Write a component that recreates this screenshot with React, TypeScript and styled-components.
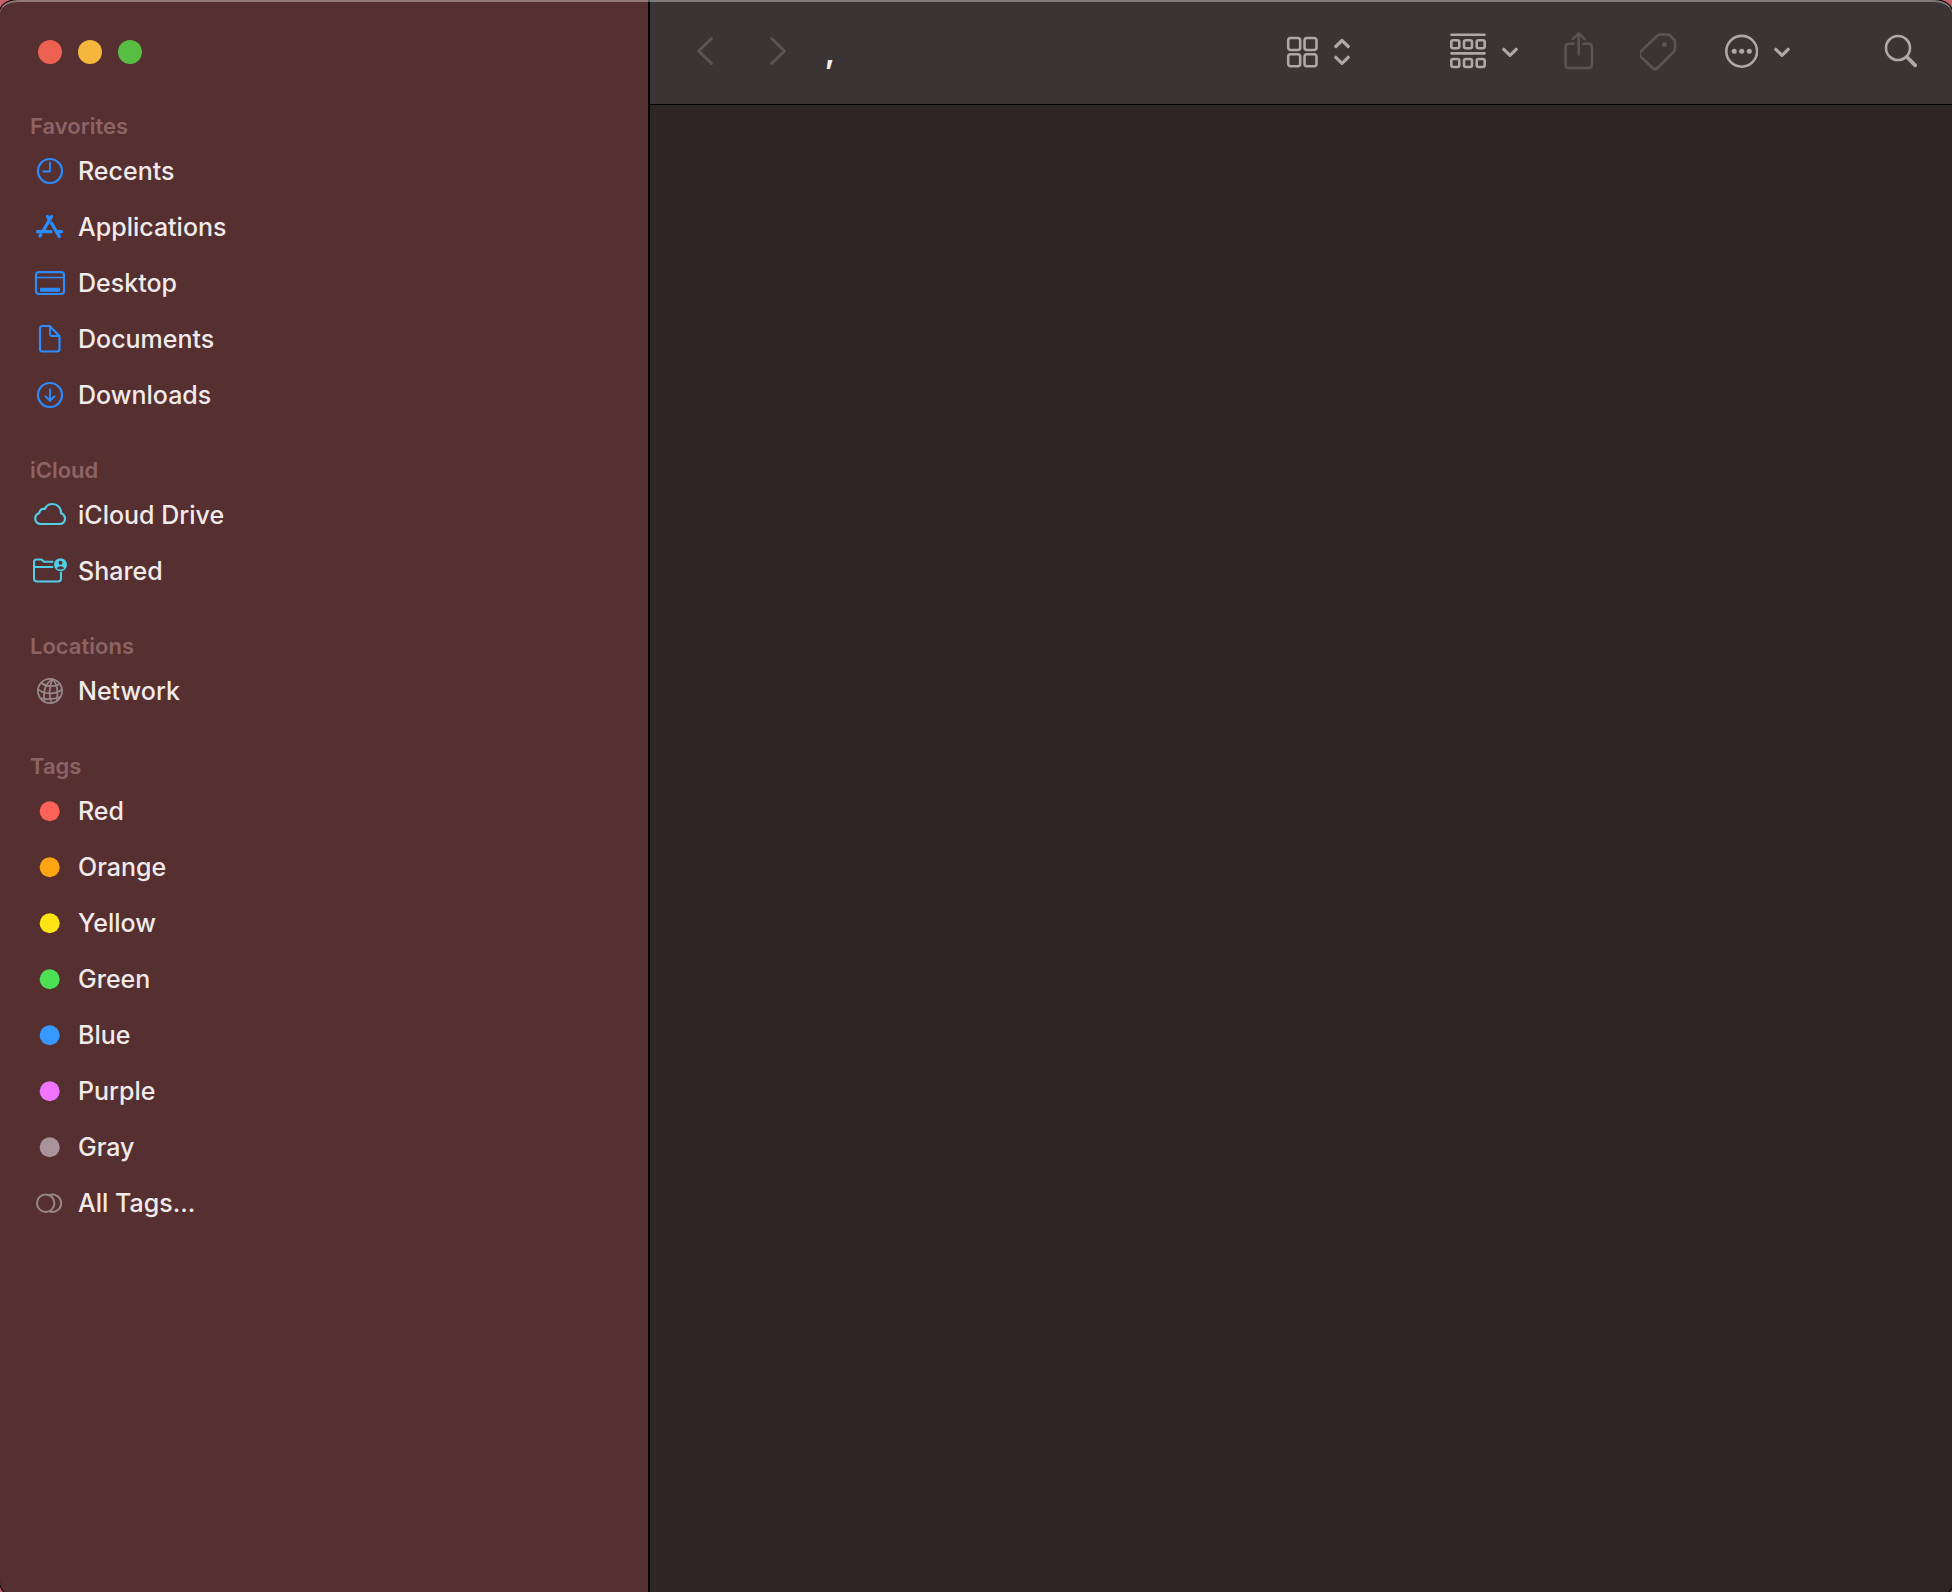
import React from "react";
import styled, { createGlobalStyle } from "styled-components";

const GlobalStyle = createGlobalStyle`
  *, *::before, *::after { box-sizing: border-box; }
  body {
    margin: 0;
    background: #c5636b;
    font-family: Inter, "Liberation Sans", sans-serif;
  }
`;

const Window = styled.div`
  position: relative;
  display: grid;
  grid-template-columns: 650px 1fr;
  min-height: 100vh;
  overflow: hidden;
  background: #2e2524;
  border-radius: 18px 18px 5px 6px / 12px 12px 7px 12px;
  box-shadow: 0 0 0 1px #000;

  &::after {
    content: "";
    position: absolute;
    inset: 0;
    border-radius: inherit;
    box-shadow: inset 0 2px 0 rgba(255, 255, 255, 0.35);
    pointer-events: none;
  }
`;

const Sidebar = styled.aside`
  background: #562f30;
  border-right: 2px solid #000;
`;

const TrafficLights = styled.div`
  display: flex;
  align-items: flex-start;
  gap: 16px;
  height: 79px;
  padding: 40px 38px 0;
`;

const Light = styled.button<{ $color: string }>`
  width: 24px;
  height: 24px;
  padding: 0;
  border: 0;
  border-radius: 50%;
  background: ${(p) => p.$color};
`;

const SectionTitle = styled.h2`
  margin: 0;
  height: 64px;
  padding: 35px 30px 0;
  font-size: 22px;
  line-height: 24px;
  font-weight: 600;
  color: #8d6466;
`;

const List = styled.ul`
  margin: 0;
  padding: 0;
  list-style: none;
`;

const Item = styled.a`
  display: flex;
  align-items: center;
  gap: 10px;
  height: 56px;
  padding: 0 32px;
  font-size: 25px;
  line-height: 32px;
  font-weight: 500;
  color: #f0eaea;
  text-decoration: none;
`;

const ItemIcon = styled.svg<{ $color: string }>`
  flex: none;
  width: 36px;
  height: 36px;
  fill: none;
  stroke: ${(p) => p.$color};
  stroke-width: 2.2;
  stroke-linecap: round;
  stroke-linejoin: round;
  color: ${(p) => p.$color};
`;

const Main = styled.main`
  display: flex;
  flex-direction: column;
`;

const Toolbar = styled.header`
  display: flex;
  align-items: center;
  height: 105px;
  padding: 0 34px 0 46px;
  background: #3b3434;
  border-bottom: 1px solid #000;
`;

const Navigation = styled.div`
  display: flex;
  gap: 56px;
`;

const Title = styled.h1`
  flex: 1;
  margin: 0 0 0 37px;
  font-size: 30px;
  line-height: 36px;
  font-weight: 700;
  color: #f0eeee;
`;

const Controls = styled.div`
  display: flex;
  gap: 94px;
`;

const Actions = styled.div`
  display: flex;
  gap: 46px;
`;

const ToolButton = styled.button`
  display: flex;
  gap: 16px;
  padding: 0;
  border: 0;
  background: none;
  color: #aea8a8;

  &:disabled {
    color: #5b5454;
  }
`;

const Glyph = styled.svg`
  display: block;
  height: 40px;
  fill: none;
  stroke: currentColor;
  stroke-width: 2.6;
  stroke-linecap: round;
  stroke-linejoin: round;
`;

function ToolIcon({ width, children }: { width: number; children: React.ReactNode }) {
  return (
    <Glyph width={width} viewBox={`0 0 ${width} 40`} aria-hidden="true">
      {children}
    </Glyph>
  );
}

const blue = "#2a8cff";
const cyan = "#50cfe8";
const gray = "#978887";

const dot = <circle cx="17.700" cy="18.200" r="10" fill="currentColor" stroke="none" />;

type Entry = { label: string; color: string; icon: React.ReactNode };

const sections: { title: string; items: Entry[] }[] = [
  {
    title: "Favorites",
    items: [
      {
        label: "Recents",
        color: blue,
        icon: (
          <>
            <circle cx="18" cy="18" r="12" />
            <path d="M18 9.5V18.500H11.200" strokeWidth="1.800" />
          </>
        ),
      },
      {
        label: "Applications",
        color: blue,
        icon: (
          <>
            <path d="M15.500 7.500L17.500 11M19.500 7.500L10.800 22.500M8 27L8.800 25.700" strokeWidth="3.300" />
            <path d="M5.500 22.700H19M26 22.700H29.500M19.500 14.200L27.300 27.500" strokeWidth="3.300" />
          </>
        ),
      },
      {
        label: "Desktop",
        color: blue,
        icon: (
          <>
            <rect x="4" y="7.200" width="28" height="21.800" rx="3" />
            <path d="M4 12.500H32" strokeWidth="1.600" strokeLinecap="butt" />
            <rect x="8" y="22.700" width="20" height="4" rx="1" fill="currentColor" stroke="none" />
          </>
        ),
      },
      {
        label: "Documents",
        color: blue,
        icon: (
          <>
            <path d="M10.500 5H17.500L27.500 15V28Q27.500 30.500 25 30.500H10.500Q8 30.500 8 28V7.500Q8 5 10.500 5Z" />
            <path d="M18 5.500V13Q18 15 20 15H27" strokeWidth="1.800" />
          </>
        ),
      },
      {
        label: "Downloads",
        color: blue,
        icon: (
          <>
            <circle cx="18" cy="18" r="12" />
            <path d="M18 12.200V23.500M13.500 19.300L18 23.700L22.500 19.300" strokeWidth="1.900" />
          </>
        ),
      },
    ],
  },
  {
    title: "iCloud",
    items: [
      {
        label: "iCloud Drive",
        color: cyan,
        icon: (
          <path
            transform="translate(0 -1)"
            d="M9 28H27.500C31 28 33 25.500 33 22.800C33 20 31 18 29 17.300C29.300 11.500 25 8 20.500 8C16.700 8 14 10 12.800 13C10 12.300 7.500 14.200 7.300 17C5 17.800 3.200 19.800 3.200 22.500C3.200 25.500 5.500 28 9 28Z"
          />
        ),
      },
      {
        label: "Shared",
        color: cyan,
        icon: (
          <g transform="translate(0 -1)">
            <path
              d="M29 20.500V26.500Q29 29.500 26 29.500H5Q2 29.500 2 26.500V10Q2 7.500 4.500 7.500H8.500Q9.700 7.500 10.700 8.500L12 9.800H20.500M2 15H20.500"
              strokeWidth="2"
            />
            <circle cx="28.500" cy="12.700" r="6.500" fill="currentColor" stroke="none" />
            <circle cx="28.500" cy="10.700" r="2" fill="#562f30" stroke="none" />
            <path d="M24.500 16.200Q28.500 12.400 32.500 16.200Q28.500 19 24.500 16.200Z" fill="#562f30" stroke="none" />
          </g>
        ),
      },
    ],
  },
  {
    title: "Locations",
    items: [
      {
        label: "Network",
        color: gray,
        icon: (
          <g strokeWidth="1.700">
            <circle cx="18" cy="18" r="12.100" />
            <path d="M20.500 6C14 10 10.500 17 12.500 29M20.500 6C17.500 13 16.500 22 19.500 30M20.500 6C25.500 11 26.500 20 24.500 28M9.500 10C14 14 22 14 28 11M6 16C12 22 24 21.500 30 16.500M8 25C15 26.500 22 26.500 28 24" />
          </g>
        ),
      },
    ],
  },
  {
    title: "Tags",
    items: [
      { label: "Red", color: "#ff6259", icon: dot },
      { label: "Orange", color: "#ffa514", icon: dot },
      { label: "Yellow", color: "#ffe314", icon: dot },
      { label: "Green", color: "#4ce055", icon: dot },
      { label: "Blue", color: "#3699ff", icon: dot },
      { label: "Purple", color: "#ef74ff", icon: dot },
      { label: "Gray", color: "#a9949c", icon: dot },
      {
        label: "All Tags...",
        color: gray,
        icon: (
          <>
            <circle cx="13.700" cy="18.200" r="8.700" strokeWidth="2" />
            <path d="M17.500 10A8.700 8.700 0 1 1 17.500 26.400" strokeWidth="2" />
          </>
        ),
      },
    ],
  },
];

function Chevron() {
  return (
    <ToolIcon width={16}>
      <path d="M1.800 17.300L8 23.300L14.200 17.300" strokeWidth="3.200" />
    </ToolIcon>
  );
}

export default function App() {
  return (
    <>
      <GlobalStyle />
      <Window>
        <Sidebar>
          <TrafficLights>
            <Light $color="#ec6152" aria-label="Close" />
            <Light $color="#f4b63d" aria-label="Minimize" />
            <Light $color="#57bd43" aria-label="Zoom" />
          </TrafficLights>
          <nav aria-label="Sidebar">
            {sections.map((section) => (
              <section key={section.title}>
                <SectionTitle>{section.title}</SectionTitle>
                <List>
                  {section.items.map((item) => (
                    <li key={item.label}>
                      <Item href="#">
                        <ItemIcon viewBox="0 0 36 36" $color={item.color} aria-hidden="true">
                          {item.icon}
                        </ItemIcon>
                        {item.label}
                      </Item>
                    </li>
                  ))}
                </List>
              </section>
            ))}
          </nav>
        </Sidebar>
        <Main>
          <Toolbar>
            <Navigation>
              <ToolButton disabled aria-label="Back">
                <ToolIcon width={18}>
                  <path d="M15.500 6.500L2.700 19L15.500 31.500" strokeWidth="3" />
                </ToolIcon>
              </ToolButton>
              <ToolButton disabled aria-label="Forward">
                <ToolIcon width={18}>
                  <path d="M1.700 6.500L14.500 19L1.700 31.500" strokeWidth="3" />
                </ToolIcon>
              </ToolButton>
            </Navigation>
            <Title>,</Title>
            <Controls>
              <ToolButton aria-label="View as icons">
                <ToolIcon width={32}>
                  <rect x="2.200" y="6" width="12" height="12" rx="2.500" />
                  <rect x="18.500" y="6" width="12" height="12" rx="2.500" />
                  <rect x="2.200" y="22.200" width="12" height="12" rx="2.500" />
                  <rect x="18.500" y="22.200" width="12" height="12" rx="2.500" />
                </ToolIcon>
                <ToolIcon width={22}>
                  <path d="M1.800 14.500L8 8.500L14.200 14.500M1.800 25.300L8 31.300L14.200 25.300" strokeWidth="3.200" />
                </ToolIcon>
              </ToolButton>
              <Actions>
                <ToolButton aria-label="Group items">
                  <ToolIcon width={36}>
                    <path d="M1.500 2.700H34.500M1.500 21.400H34.500" />
                    {[8.3, 27].map((y) =>
                      [1.3, 14, 26.7].map((x) => (
                        <rect key={`${x}-${y}`} x={x} y={y} width="8" height="8" rx="2" />
                      ))
                    )}
                  </ToolIcon>
                  <Chevron />
                </ToolButton>
                <ToolButton disabled aria-label="Share">
                  <ToolIcon width={30}>
                    <path d="M9.500 11.800H5Q1.500 11.800 1.500 15.300V32.500Q1.500 36 5 36H24.500Q28 36 28 32.500V15.300Q28 11.800 24.500 11.800H19.500M14.700 22.500V1.800M8.800 7L14.700 1.500L20.500 7" />
                  </ToolIcon>
                </ToolButton>
                <ToolButton disabled aria-label="Edit tags">
                  <ToolIcon width={38}>
                    <path
                      transform="translate(-1 0)"
                      d="M21.500 2.500H28.500Q30 2.500 31 3.500L35 7.500Q36 8.500 36 10V16.500Q36 18.500 34.500 20L18.500 36Q16 38.500 13.500 36L1.500 24.500Q-0.500 22 1.500 19.800L18 4Q19.500 2.500 21.500 2.500Z"
                    />
                    <circle cx="24.500" cy="12.500" r="2.500" fill="currentColor" stroke="none" />
                  </ToolIcon>
                </ToolButton>
                <ToolButton aria-label="More actions">
                  <ToolIcon width={34}>
                    <circle cx="17.700" cy="19.300" r="15.400" />
                    <g fill="currentColor" stroke="none">
                      <circle cx="10.200" cy="19.300" r="2.500" />
                      <circle cx="17.700" cy="19.300" r="2.500" />
                      <circle cx="25.300" cy="19.300" r="2.500" />
                    </g>
                  </ToolIcon>
                  <Chevron />
                </ToolButton>
              </Actions>
              <ToolButton aria-label="Search">
                <ToolIcon width={34}>
                  <circle cx="14" cy="16" r="12" />
                  <path d="M23 25L31.200 33.300" strokeWidth="3.800" />
                </ToolIcon>
              </ToolButton>
            </Controls>
          </Toolbar>
        </Main>
      </Window>
    </>
  );
}
